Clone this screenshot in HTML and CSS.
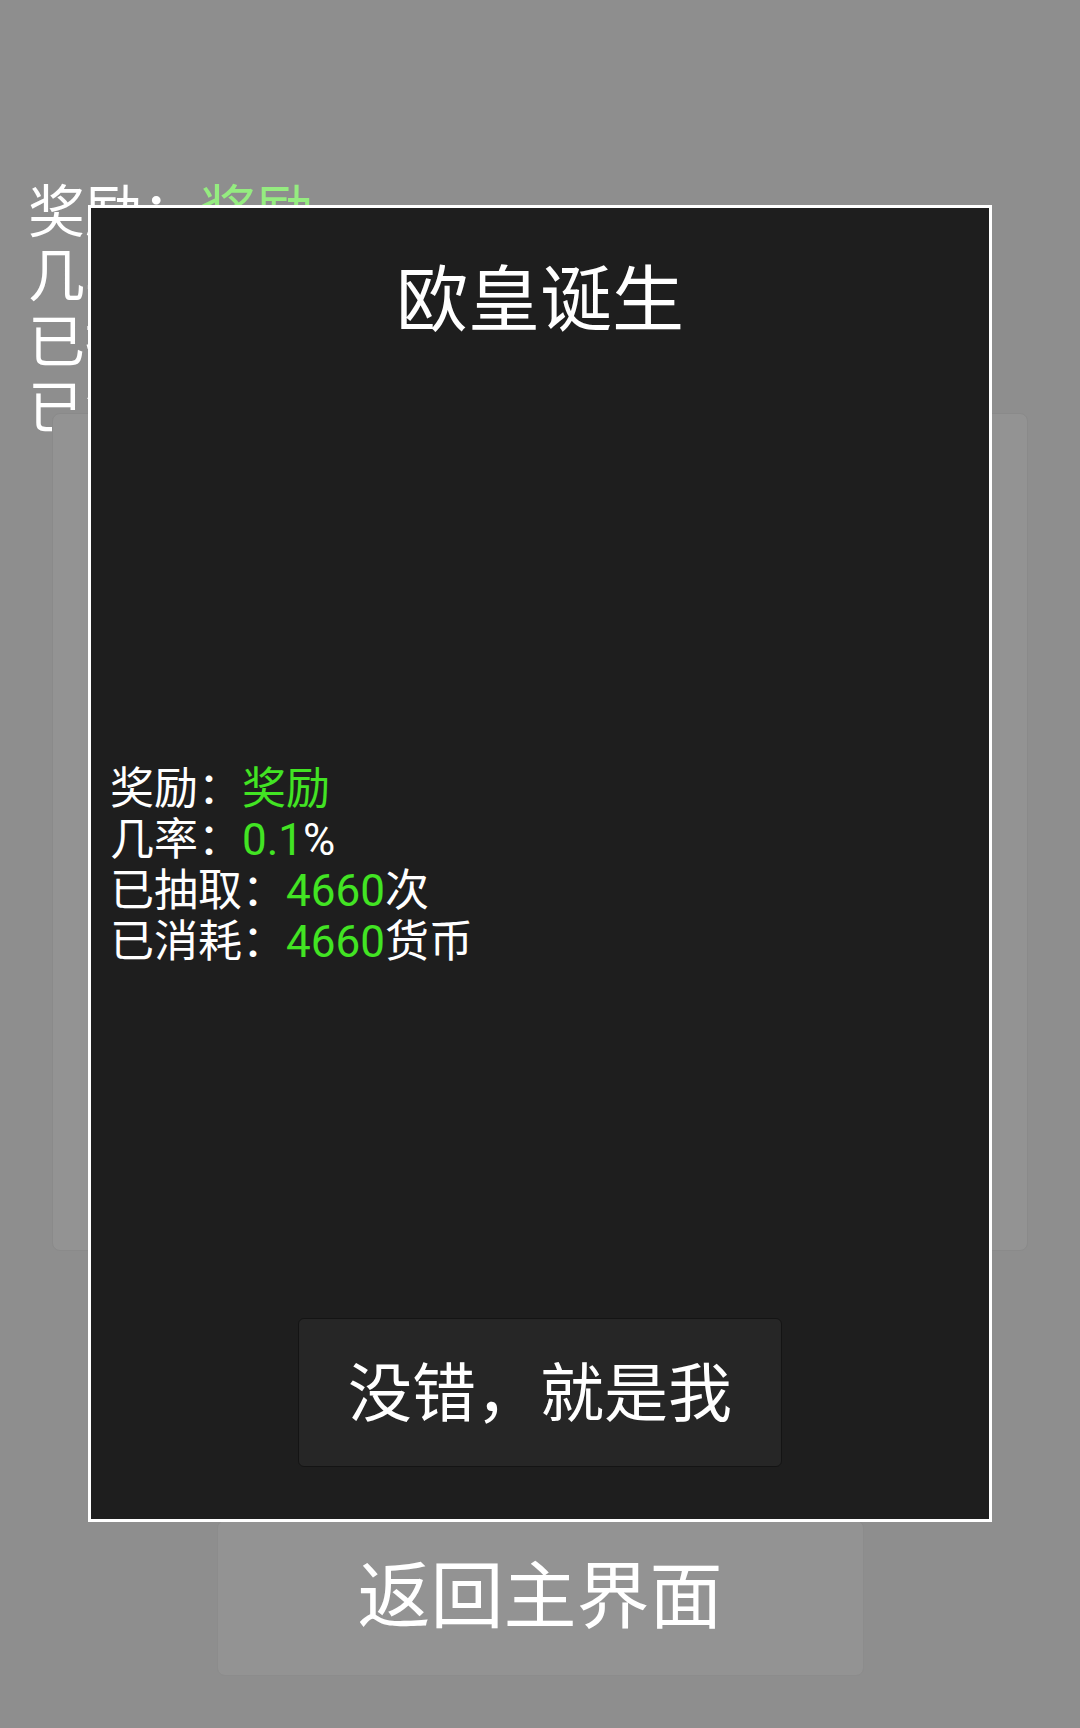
FILE: index.html
```html
<!DOCTYPE html>
<html lang="zh-CN">
<head>
  <meta charset="UTF-8">
  <meta name="viewport" content="width=device-width, initial-scale=1.0">
  <title>抽奖</title>
  <link rel="stylesheet" href="styles.css">
</head>
<body>
  <div class="page">
    <div class="stats">
      <div>奖励：<span class="hit">奖励</span></div>
      <div>几率：<span class="hit num">0.1</span><span class="num">%</span></div>
      <div>已抽取：<span class="hit num">4660</span>次</div>
      <div>已消耗：<span class="hit num">4660</span>货币</div>
    </div>
    <div class="card"></div>
    <button class="back-btn">返回主界面</button>
  </div>

  <div class="modal">
    <h1 class="modal-title">欧皇诞生</h1>
    <div class="modal-stats">
      <div>奖励：<span class="hit">奖励</span></div>
      <div>几率：<span class="hit num">0.1</span><span class="num">%</span></div>
      <div>已抽取：<span class="hit num">4660</span>次</div>
      <div>已消耗：<span class="hit num">4660</span>货币</div>
    </div>
    <button class="confirm-btn">没错，就是我</button>
  </div>
</body>
</html>
```

FILE: styles.css
```css
body {
  margin: 0;
  padding: 0;
  background-color: #8e8e8e;
  font-family: 'Noto Sans CJK SC', 'Noto Sans', sans-serif;
  color: #ffffff;
  width: 1080px;
  height: 1728px;
  overflow: hidden;
}
.num {
  font-family: 'Roboto', 'Noto Sans CJK SC', sans-serif;
  line-height: 1;
}
.page {
  display: flex;
  flex-direction: column;
  align-items: center;
}
.stats {
  align-self: flex-start;
  padding: 175px 0 0 28px;
  font-size: 57px;
  line-height: 64px;
}
.stats .hit {
  color: #95ec80;
}
.card {
  width: 974px;
  height: 836px;
  margin-top: -24px;
  background-color: #939393;
  border: 1px solid #8a8a8a;
  border-radius: 8px;
}
.back-btn {
  width: 647px;
  height: 156px;
  margin-top: 269px;
  padding-bottom: 18px;
  background-color: #939393;
  border: 1px solid #8c8c8c;
  border-radius: 8px;
  color: #ffffff;
  font-family: inherit;
  font-size: 73px;
}

.modal {
  position: absolute;
  left: 88px;
  top: 205px;
  width: 898px;
  height: 1311px;
  border: 3px solid #ffffff;
  background-color: #1e1e1e;
  display: flex;
  flex-direction: column;
  align-items: center;
}
.modal-title {
  margin: 41px 0 0;
  font-size: 72px;
  font-weight: 400;
  line-height: 90px;
}
.modal-stats {
  align-self: flex-start;
  margin: 421px 0 0 19px;
  font-size: 44px;
  line-height: 51px;
}
.modal-stats .hit {
  color: #42e423;
}
.confirm-btn {
  width: 484px;
  height: 149px;
  margin-top: auto;
  margin-bottom: 52px;
  padding-bottom: 10px;
  background-color: #262626;
  border: 1px solid #141414;
  border-radius: 6px;
  color: #ffffff;
  font-family: inherit;
  font-size: 64px;
}
```
